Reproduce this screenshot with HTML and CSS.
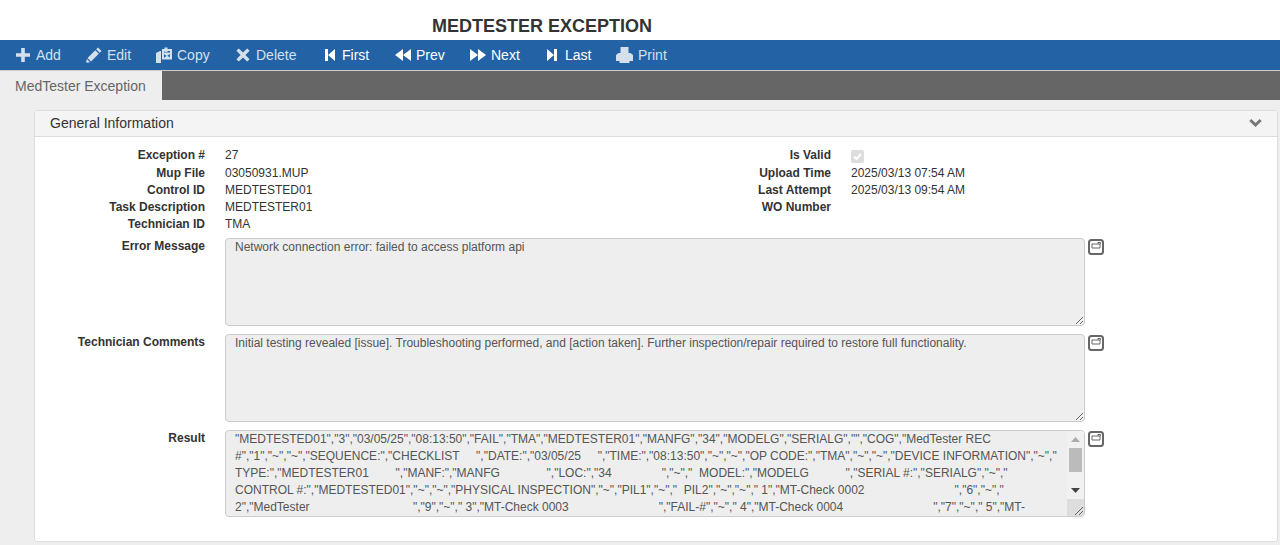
FILE: index.html
```html
<!DOCTYPE html>
<html lang="en">
  <head>
    <meta charset="UTF-8" />
    <title>MedTester Exception</title>
    <link rel="stylesheet" href="styles.css">
  </head>
  <body>
    <div class="title-bar"><h1>MEDTESTER EXCEPTION</h1></div>

    <div class="toolbar">
      <a class="tool dim gap6">
        <svg class="icon w14" viewBox="0 0 14 14"><path d="M5.200 0h3.600v5.200H14v3.600H8.800V14H5.200V8.800H0V5.200h5.200z" /></svg>
        Add
      </a>
      <a class="tool dim">
        <svg class="icon w16" viewBox="0 0 16 16"><path d="M12 .5l3.500 3.500-1.800 1.800-3.500-3.500zM9.300 3.200l3.500 3.500-7.800 7.800-3.500-3.500zM.8 11.900l3.300 3.300-3.300 .6-.7-.7z" /></svg>
        Edit
      </a>
      <a class="tool dim size80">
        <svg class="icon w16" viewBox="0 0 16 16"><path d="M0 6l4-2h1v12H0zM6 2h2.500V.5h3V2H16v10.500H6zM8 4v1.500h6V4h-2.500v1H8.500V4zM8 7l2.500 2-2.500 1.800zM13.800 7v3.500l-2.500-1.800z" fill-rule="evenodd" /></svg>
        Copy
      </a>
      <a class="tool dim gap6 size88">
        <svg class="icon w14" viewBox="0 0 14 14"><path d="M2.800.4L7 4.600 11.200.4 13.600 2.800 9.400 7l4.200 4.200-2.400 2.400L7 9.400 2.800 13.600.4 11.200 4.600 7 .4 2.800z" /></svg>
        Delete
      </a>
      <a class="tool gap6">
        <svg class="icon w12" viewBox="0 0 12 14"><path d="M1 1h3v12H1zM11 1v12L4 7z" /></svg>
        First
      </a>
      <a class="tool size76">
        <svg class="icon w17" viewBox="0 0 17 14"><path d="M9 1v12L1 7zM17 1v12L9 7z" /></svg>
        Prev
      </a>
      <a class="tool size76 gap4">
        <svg class="icon w17" viewBox="0 0 17 14"><path d="M0 1v12l8-6zM8 1v12l8-6z" /></svg>
        Next
      </a>
      <a class="tool gap7">
        <svg class="icon w12" viewBox="0 0 12 14"><path d="M1 1v12l7-6zM8 1h3v12H8z" /></svg>
        Last
      </a>
      <a class="tool dim">
        <svg class="icon w17 tall" viewBox="0 0 17 16"><path d="M4.500 0h8v6h2l2.500 2v6h-3.500v2h-10v-2H0V8l2.500-2h2z" /></svg>
        Print
      </a>
    </div>

    <div class="tabs">
      <div class="tab active">MedTester Exception</div>
    </div>

    <div class="content">
      <div class="panel">
        <div class="panel-head">
          <span>General Information</span>
          <svg class="chevron" viewBox="0 0 14 9"><path d="M2.300 0L7 4.400 11.700 0 14 2.300 7 9 0 2.300z" /></svg>
        </div>
        <div class="panel-body">
          <div class="fields">
            <label>Exception #</label><div>27</div>
            <label>Is Valid</label><div><span class="check"><svg viewBox="0 0 13 13"><path d="M3 6.500l2.500 2.500L10 4" /></svg></span></div>
            <label>Mup File</label><div>03050931.MUP</div>
            <label>Upload Time</label><div>2025/03/13 07:54 AM</div>
            <label>Control ID</label><div>MEDTESTED01</div>
            <label>Last Attempt</label><div>2025/03/13 09:54 AM</div>
            <label>Task Description</label><div>MEDTESTER01</div>
            <label>WO Number</label><div></div>
            <label>Technician ID</label><div>TMA</div>
          </div>

          <div class="memo-row first">
            <label>Error Message</label>
            <textarea class="memo" readonly>Network connection error: failed to access platform api</textarea>
            <svg class="expand" viewBox="0 0 16 16"><rect x="1" y="1" width="14" height="14" rx="2.500" /><path class="thin" d="M4 5h8v4H4zM10 5V3.500h2.500V5" /></svg>
          </div>
          <div class="memo-row">
            <label>Technician Comments</label>
            <textarea class="memo" readonly>Initial testing revealed [issue]. Troubleshooting performed, and [action taken]. Further inspection/repair required to restore full functionality.</textarea>
            <svg class="expand" viewBox="0 0 16 16"><rect x="1" y="1" width="14" height="14" rx="2.500" /><path class="thin" d="M4 5h8v4H4zM10 5V3.500h2.500V5" /></svg>
          </div>
          <div class="memo-row">
            <label>Result</label>
            <div class="memo-wrap">
              <textarea class="memo short" readonly>"MEDTESTED01","3","03/05/25","08:13:50","FAIL","TMA","MEDTESTER01","MANFG","34","MODELG","SERIALG","","COG","MedTester REC
#","1","~","~","SEQUENCE:","CHECKLIST     ","DATE:","03/05/25     ","TIME:","08:13:50","~","~","OP CODE:","TMA","~","~","DEVICE INFORMATION","~","
TYPE:","MEDTESTER01        ","MANF:","MANFG              ","LOC:","34               ","~","  MODEL:","MODELG           ","SERIAL #:","SERIALG","~","
CONTROL #:","MEDTESTED01","~","~","PHYSICAL INSPECTION","~","PIL1","~","  PIL2","~","~"," 1","MT-Check 0002                           ","6","~","
2","MedTester                               ","9","~"," 3","MT-Check 0003                           ","FAIL-#","~"," 4","MT-Check 0004                           ","7","~"," 5","MT-
Check 0005</textarea>
              <div class="scrollbar">
                <div class="arrow"><svg viewBox="0 0 9 5"><path class="arrow-up" d="M4.500 0L9 5H0z" /></svg></div>
                <div class="track"><div class="thumb"></div></div>
                <div class="arrow"><svg viewBox="0 0 9 5"><path class="arrow-down" d="M0 0h9L4.500 5z" /></svg></div>
                <div class="grip"><svg viewBox="0 0 17 17"><path d="M8 16l8-8M12 16l4-4" /></svg></div>
              </div>
            </div>
            <svg class="expand" viewBox="0 0 16 16"><rect x="1" y="1" width="14" height="14" rx="2.500" /><path class="thin" d="M4 5h8v4H4zM10 5V3.500h2.500V5" /></svg>
          </div>
        </div>
      </div>
    </div>
  </body>
</html>
```

FILE: styles.css
```css
html,
body {
  margin: 0;
  height: 100%;
  overflow: hidden;
}
body {
  font-family: "Liberation Sans", Arial, sans-serif;
  font-size: 12px;
  color: #333;
  background-color: #eee;
}
.title-bar {
  height: 40px;
  background: white;
  box-sizing: border-box;
  padding: 16px 0 0 432px;
}
.title-bar h1 {
  margin: 0;
  font-size: 18px;
  line-height: 20px;
  color: #333;
}
.toolbar {
  display: flex;
  align-items: center;
  height: 30px;
  padding-left: 16px;
  background-color: #2363a5;
  border-bottom: 1px solid #ccc;
}
.tool {
  display: flex;
  align-items: center;
  gap: 5px;
  width: 70px;
  flex: none;
  font-size: 14px;
  color: white;
}
.tool.dim {
  color: #d5e0ed;
}
.gap4 { gap: 4px; }
.gap6 { gap: 6px; }
.gap7 { gap: 7px; }
.size76 { width: 76px; }
.size80 { width: 80px; }
.size88 { width: 88px; }
.icon {
  height: 14px;
  fill: currentColor;
  flex: none;
}
.w12 { width: 12px; }
.w14 { width: 14px; }
.w16 { width: 16px; height: 16px; }
.w17 { width: 17px; }
.tall { height: 16px; }
.tabs {
  height: 29px;
  background-color: #666;
}
.tab {
  width: 162px;
  height: 29px;
  box-sizing: border-box;
  padding-left: 15px;
  line-height: 30px;
  font-size: 14px;
  color: #666;
  background-color: #eee;
}
.content {
  padding: 10px 2px 0 34px;
}
.panel {
  height: 430px;
  background: white;
  border: 1px solid #ddd;
  border-radius: 3px;
}
.panel-head {
  display: flex;
  justify-content: space-between;
  align-items: center;
  height: 23px;
  padding: 0 15px 2px 15px;
  font-size: 14px;
  background-color: #f4f4f4;
  border-bottom: 1px solid #ddd;
}
.chevron {
  width: 13px;
  height: 8px;
  fill: #777;
}
.panel-body {
  padding-top: 10px;
}
.fields {
  display: grid;
  grid-template-columns: 170px 416px 170px 1fr;
  grid-template-rows: 18px;
  grid-auto-rows: 17px;
  column-gap: 20px;
  line-height: 17px;
}
label {
  font-weight: bold;
  text-align: right;
}
.check {
  display: block;
  width: 13px;
  height: 13px;
  margin-top: 3px;
  background-color: #ddd;
  border-radius: 2px;
}
.check svg {
  display: block;
  fill: none;
  stroke: white;
  stroke-width: 2;
}
.memo-row {
  display: grid;
  grid-template-columns: 170px 860px 16px;
  column-gap: 20px;
  margin-top: 8px;
}
.memo-row.first {
  margin-top: 5px;
}
.memo-row label {
  padding-top: 1px;
  line-height: 14px;
}
.memo {
  display: block;
  width: 860px;
  height: 88px;
  margin: 0;
  padding: 0 9px;
  box-sizing: border-box;
  font-family: inherit;
  font-size: 12px;
  line-height: 17px;
  white-space: pre-wrap;
  color: #555;
  background-color: #eee;
  border: 1px solid #ccc;
  border-radius: 4px;
  outline: none;
  resize: both;
}
.memo.short {
  height: 87px;
  padding-right: 26px;
  overflow: hidden;
  resize: none;
}
.memo-wrap {
  position: relative;
}
/* headless chrome hides real scrollbars, so this one is drawn */
.scrollbar {
  position: absolute;
  top: 1px;
  right: 1px;
  bottom: 1px;
  width: 17px;
  display: flex;
  flex-direction: column;
  background-color: #f1f1f1;
  border-radius: 0 3px 3px 0;
  overflow: hidden;
}
.arrow {
  display: flex;
  align-items: center;
  justify-content: center;
  height: 17px;
}
.arrow svg {
  width: 9px;
  height: 5px;
}
.arrow-up {
  fill: #aaa;
}
.arrow-down {
  fill: #444;
}
.track {
  flex: 1;
  padding: 0 2px;
}
.thumb {
  height: 24px;
  background-color: #bbb;
}
.grip {
  height: 17px;
  background-color: #ddd;
}
.grip svg {
  display: block;
  stroke: #666;
  fill: none;
}
.expand {
  width: 16px;
  height: 16px;
  margin: 1px 0 0 -17px;
  fill: none;
  stroke: #666;
  stroke-width: 2;
}
.expand .thin {
  stroke-width: 1;
}
```
